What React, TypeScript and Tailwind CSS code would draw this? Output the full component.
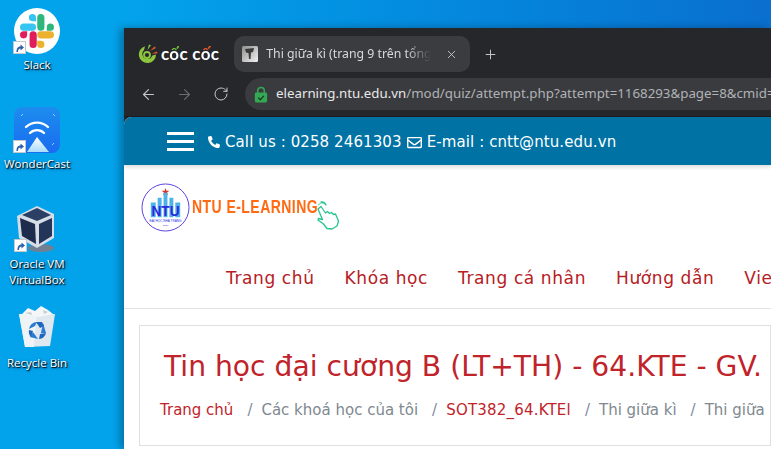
import { ArrowLeft, ArrowRight, Plus, RotateCw, X } from "lucide-react";
import { FaPhoneAlt, FaRegEnvelope } from "react-icons/fa";

const desktopFont = "font-['Open_Sans','Noto_Sans',sans-serif]";
const pageFont = "font-['DejaVu_Sans','Liberation_Sans',sans-serif]";

function ShortcutBadge() {
    return (
        <div className="absolute left-0 bottom-0 flex h-[13px] w-[13px] items-center justify-center border border-[#c4c8cc] bg-white">
            <svg viewBox="0 0 11 11" className="h-[11px] w-[11px]">
                <path d="M2.5 10 C2.5 6 4 4.5 6.5 4.5 L6.5 2.5 L10 5.5 L6.5 8.5 L6.5 6.5 C5 6.5 4 7.5 4 10 Z" fill="#2f5fa8" />
            </svg>
        </div>
    );
}

function SlackIcon() {
    return (
        <div className="relative h-[46px] w-[46px]">
            <div className="flex h-[46px] w-[46px] items-center justify-center rounded-full bg-white">
                <svg viewBox="0 0 54 54" className="h-[34px] w-[34px]">
                    <path d="M19.7 0a5.7 5.7 0 0 0 0 11.4h5.7V5.7A5.7 5.7 0 0 0 19.7 0zm0 15.2H5.7a5.7 5.7 0 0 0 0 11.4h14a5.7 5.7 0 0 0 0-11.4z" fill="#36c5f0" />
                    <path d="M54 20.9a5.7 5.7 0 0 0-11.4 0v5.7h5.7a5.7 5.7 0 0 0 5.7-5.7zm-15.2 0v-15.2a5.7 5.7 0 0 0-11.4 0v15.2a5.7 5.7 0 0 0 11.4 0z" fill="#2eb67d" />
                    <path d="M33.1 54a5.7 5.7 0 0 0 0-11.4h-5.7v5.7a5.7 5.7 0 0 0 5.7 5.7zm0-15.2h15.2a5.7 5.7 0 0 0 0-11.4H33.1a5.7 5.7 0 0 0 0 11.4z" fill="#ecb22e" />
                    <path d="M0 33.1a5.7 5.7 0 0 0 11.4 0v-5.7H5.7A5.7 5.7 0 0 0 0 33.1zm15.2 0v15.2a5.7 5.7 0 0 0 11.4 0V33.1a5.7 5.7 0 0 0-11.4 0z" fill="#e01e5a" />
                </svg>
            </div>
            <div className="absolute -left-[1px] bottom-0"><div className="relative h-[13px] w-[13px]"><ShortcutBadge /></div></div>
        </div>
    );
}

function WonderCastIcon() {
    return (
        <div className="relative h-[46px] w-[46px]">
            <svg viewBox="0 0 46 46" className="h-[46px] w-[46px]">
                <defs>
                    <linearGradient id="wc" x1="0" y1="0" x2="0" y2="1">
                        <stop offset="0" stopColor="#1c8dee" />
                        <stop offset="1" stopColor="#1a6cf0" />
                    </linearGradient>
                    <linearGradient id="wcTri" x1="0" y1="0" x2="0" y2="1">
                        <stop offset="0" stopColor="#ffffff" />
                        <stop offset="1" stopColor="#a9dcfb" />
                    </linearGradient>
                </defs>
                <rect width="46" height="46" rx="8" fill="url(#wc)" />
                <path d="M12 20 A16 16 0 0 1 34 20" fill="none" stroke="#fff" strokeWidth="2.4" strokeLinecap="round" />
                <path d="M16 26 A10 10 0 0 1 30 26" fill="none" stroke="#fff" strokeWidth="2.4" strokeLinecap="round" />
                <path d="M23 30 L35 45 L13 45 Z" fill="url(#wcTri)" />
                <path d="M7 9 L9 7 M39 7 L41 9 M38 38 L40 36" stroke="#9fd2fa" strokeWidth="1" />
            </svg>
            <div className="absolute -left-[1px] bottom-0"><div className="relative h-[13px] w-[13px]"><ShortcutBadge /></div></div>
        </div>
    );
}

function VirtualBoxIcon() {
    return (
        <div className="relative h-[48px] w-[46px]">
            <svg viewBox="0 0 46 48" className="h-[48px] w-[46px]">
                <ellipse cx="27" cy="43" rx="13" ry="4" fill="#6f8092" />
                <path d="M23 1 L40 9 L40 33 L23 43 L5 33 L3 11 Z" fill="#d6dde6" />
                <path d="M23 3 L37 10 L23 16 L8 10 Z" fill="#2b3e63" />
                <path d="M6 13 L21 19 L22 39 L8 31 Z" fill="#1d2c4c" />
                <path d="M25 19 L38 13 L38 31 L25 39 Z" fill="#24355a" />
            </svg>
            <div className="absolute left-0 bottom-[1px]"><div className="relative h-[13px] w-[13px]"><ShortcutBadge /></div></div>
        </div>
    );
}

function RecycleBinIcon() {
    return (
        <div className="h-[47px]">
            <svg viewBox="0 0 40 44" className="h-[44px] w-[40px]">
                <path d="M2 9 L38 9 L33 41 L8 42 Z" fill="#dfe8ee" />
                <path d="M2 9 L20 9 L17 42 L8 42 Z" fill="#eef3f6" />
                <path d="M5 9 L11 3 L18 6 L24 1 L31 5 L36 9 L22 12 Z" fill="#f4f6f7" />
                <path d="M8 8 L14 7 L15 10 Z M26 5 L31 7 L27 9 Z" fill="#c5ced4" />
                <path d="M12 24 A8 8 0 0 1 20 17 L18 21 Z M26 18 L29 28 L24 28 Z M21 34 L13 32 L16 27 Z" fill="#2a7bd1" />
                <path d="M19 17 L25 17 L27 21 L23 23 Z M29 28 A8 8 0 0 1 22 34 L23 29 Z M14 32 A8 8 0 0 1 12 25 L16 26 Z" fill="#1e66bf" />
            </svg>
        </div>
    );
}

function DesktopItem({ x, y, width, lines, icon }: { x: number; y: number; width: number; lines: string[]; icon: React.ReactNode }) {
    return (
        <div className="absolute flex flex-col items-center" style={{ left: x, top: y, width }}>
            {icon}
            <div className={`mt-[3px] text-center text-[11.5px] leading-[16px] text-white [text-shadow:1px_1px_1px_#000,1px_1px_3px_#00305a] ${desktopFont}`}>
                {lines.map((line) => (
                    <div key={line} className="whitespace-nowrap">{line}</div>
                ))}
            </div>
        </div>
    );
}

function CocCocLogo() {
    return (
        <div className="flex items-center gap-[3px]">
            <svg viewBox="0 0 22 22" className="h-[22px] w-[22px]">
                <path d="M9 3.2 A8.6 8.6 0 1 0 20 11.5 L16.4 12.5 A5.2 5.2 0 1 1 8 7 Z" fill="#8cc63f" />
                <circle cx="11" cy="12" r="3" fill="none" stroke="#8cc63f" strokeWidth="1.8" />
                <path d="M11.5 7 L13 1.5 L15 2.2 Z" fill="#8cc63f" />
                <path d="M14 8 L18.5 3.5 L20 5 Z" fill="#e8562a" />
                <path d="M15.5 10.5 L21 8.6 L21.4 10.4 Z" fill="#e8562a" />
            </svg>
            <div className="text-[17px] leading-[22px] font-bold tracking-[0.3px] whitespace-pre text-white font-['Lato','Noto_Sans',sans-serif]">
                c<span className="bg-[linear-gradient(#6fbf3c_38%,#ffffff_38%)] bg-clip-text text-transparent">ố</span>c c<span className="bg-[linear-gradient(#e8562a_38%,#ffffff_38%)] bg-clip-text text-transparent">ố</span>c
            </div>
        </div>
    );
}

function TabFavicon() {
    return (
        <svg viewBox="0 0 16 16" className="h-[16px] w-[16px] shrink-0">
            <defs>
                <linearGradient id="fav" x1="0" y1="0" x2="1" y2="1">
                    <stop offset="0" stopColor="#8f8f8f" />
                    <stop offset="1" stopColor="#f2f2f2" />
                </linearGradient>
            </defs>
            <rect width="16" height="16" rx="1.5" fill="url(#fav)" />
            <path d="M3 3 L12 2 L11 6 L9 6.5 L8.5 13 L7 13 L6.5 7 L4 6.5 Z" fill="#3a3a3a" />
        </svg>
    );
}

function LockIcon() {
    return (
        <svg viewBox="0 0 14 18" className="h-[17px] w-[14px] shrink-0">
            <path d="M3.5 8 V5 a3.5 3.5 0 0 1 7 0 V8" fill="none" stroke="#34a853" strokeWidth="1.6" />
            <rect x="0.5" y="7" width="13" height="10.5" rx="1.5" fill="#34a853" />
            <path d="M4 12.3 L6.2 14.5 L10 10.5" fill="none" stroke="#1c3b26" strokeWidth="1.4" />
        </svg>
    );
}

function NtuLogo() {
    return (
        <svg viewBox="0 0 50 50" className="h-[49px] w-[49px] shrink-0">
            <circle cx="25" cy="25" r="24" fill="#fff" stroke="#5b3fe0" strokeWidth="1" />
            <path d="M25 5 L26 8 L29 8 L26.6 9.8 L27.5 12.5 L25 10.8 L22.5 12.5 L23.4 9.8 L21 8 L24 8 Z" fill="#d9342b" />
            <path d="M10 20 H15 V35 H10 Z M17 15 H21 V35 H17 Z M23 10 H27 V35 H23 Z M29 15 H33 V35 H29 Z M35 20 H40 V35 H35 Z" fill="#4fb2e6" />
            <text x="25" y="34" textAnchor="middle" fontSize="14" fontWeight="700" fill="#2a2ae0" fontFamily="Liberation Sans, sans-serif">NTU</text>
            <text x="25" y="39.5" textAnchor="middle" fontSize="3.2" fill="#2a2ae0" fontFamily="Liberation Sans, sans-serif">ĐẠI HỌC NHA TRANG</text>
            <text x="25" y="44" textAnchor="middle" fontSize="2.6" fill="#2a2ae0" fontFamily="Liberation Sans, sans-serif">1959</text>
        </svg>
    );
}

function HandPointer() {
    return (
        <svg viewBox="0 0 26 30" className="h-[30px] w-[26px]" fill="none" stroke="#25c48f" strokeWidth="1.3" strokeLinejoin="round" strokeLinecap="round">
            <path d="M7 2 A5 5 0 0 1 12 5" />
            <path d="M4.5 5 A4 4 0 0 1 9 3" opacity="0.6" />
            <path d="M4 9 L7 6.5 L11.5 13 L13.5 11.5 L15.5 13.5 L17.5 12.5 L19.5 14.5 L21.5 14 L24.5 21 L23 26 L18 29 L13 28.5 L9.5 24 L4 20 L4.5 18.5 L8.5 19.5 Z" />
        </svg>
    );
}

const navItems = ["Trang chủ", "Khóa học", "Trang cá nhân", "Hướng dẫn", "Vietnamese"];

function Slash() {
    return <span className="mr-[9px] ml-[14px] text-[#7e8c9e]">/</span>;
}

export default function App() {
    return (
        <div className="relative h-[449px] w-[771px] overflow-hidden bg-[#03a3ec]">
            <DesktopItem x={3} y={8} width={68} lines={["Slack"]} icon={<SlackIcon />} />
            <DesktopItem x={3} y={107} width={68} lines={["WonderCast"]} icon={<WonderCastIcon />} />
            <DesktopItem x={3} y={205} width={68} lines={["Oracle VM", "VirtualBox"]} icon={<VirtualBoxIcon />} />
            <DesktopItem x={3} y={305} width={68} lines={["Recycle Bin"]} icon={<RecycleBinIcon />} />

            <div className="absolute top-0 left-[124px] h-[28px] w-[647px] bg-gradient-to-r from-[#03a3ec] to-[#0a6fcf]" />

            {/* browser window */}
            <div className="absolute top-[28px] left-[124px] flex h-[421px] w-[647px] flex-col overflow-hidden bg-[#26272a] shadow-[-4px_0_8px_rgba(0,0,0,0.3)]">
                <div className="flex h-[44px] shrink-0 items-center bg-[#26272a] pt-[8px] pr-2 pl-[12px]">
                    <CocCocLogo />
                    <div className="ml-[15px] flex h-[36px] w-[236px] shrink-0 items-center rounded-[10px] bg-[#3b3c40] pr-[12px] pl-[8px] font-['Noto_Sans','Open_Sans',sans-serif]">
                        <TabFavicon />
                        <span className="ml-[8px] w-[165px] overflow-hidden text-[12.3px] whitespace-nowrap text-[#d8d8d8] [mask-image:linear-gradient(to_right,#000_85%,transparent)]">Thi giữa kì (trang 9 trên tổng số 10)</span>
                        <X className="ml-auto h-[13px] w-[13px] text-[#d0d0d0]" strokeWidth={1.6} />
                    </div>
                    <Plus className="ml-[13px] h-[15px] w-[15px] text-[#c4c4c4]" strokeWidth={1.6} />
                </div>

                <div className="flex h-[45px] shrink-0 items-center border-b border-[#1b1c1e] bg-[#26272a] pl-[16px]">
                    <ArrowLeft className="h-[17px] w-[17px] text-[#c8c8c8]" strokeWidth={1.5} />
                    <ArrowRight className="ml-[19px] h-[17px] w-[17px] text-[#6c6d70]" strokeWidth={1.5} />
                    <RotateCw className="ml-[20px] h-[16px] w-[16px] text-[#c8c8c8]" strokeWidth={1.5} />
                    <div className="ml-[16px] flex h-[32px] min-w-0 flex-1 items-center gap-[8px] rounded-l-[16px] bg-[#3a3b3f] pl-[9px] font-['Noto_Sans','Open_Sans',sans-serif]">
                        <LockIcon />
                        <span className="overflow-hidden text-[13.3px] whitespace-nowrap text-[#e8e8e8]">
                            elearning.ntu.edu.vn<span className="text-[#b0b2b6]">/mod/quiz/attempt.php?attempt=1168293&amp;page=8&amp;cmid=</span>
                        </span>
                    </div>
                </div>

                <div className={`flex min-h-0 flex-1 flex-col overflow-hidden rounded-tl-[8px] bg-white ${pageFont}`}>
                    <div className="flex h-[48px] shrink-0 items-center bg-[#0072a4] pl-[43px] text-[15px] tracking-[0.1px] whitespace-nowrap text-white shadow-[0_2px_4px_rgba(0,0,0,0.15)]">
                        <div className="flex w-[27px] flex-col gap-[5px]">
                            <div className="h-[3px] bg-white" />
                            <div className="h-[3px] bg-white" />
                            <div className="h-[3px] bg-white" />
                        </div>
                        <FaPhoneAlt className="mt-[2px] ml-[14px] h-[12px] w-[12px]" />
                        <span className="mt-[2px] ml-[5px]">Call us : 0258 2461303</span>
                        <FaRegEnvelope className="mt-[2px] ml-[5px] h-[15px] w-[15px]" />
                        <span className="mt-[2px] ml-[5px]">E-mail : cntt@ntu.edu.vn</span>
                    </div>

                    <div className="flex h-[90px] shrink-0 items-start pt-[18px] pl-[17px]">
                        <NtuLogo />
                        <div className="relative mt-[14px] ml-[2px] flex items-start">
                            <span className="origin-left scale-y-[1.25] text-[14px] leading-[20px] font-bold tracking-[0.45px] whitespace-nowrap text-[#ff6a13] font-['Liberation_Sans',sans-serif]">NTU E-LEARNING</span>
                            <div className="mt-[3px] -ml-[4px]"><HandPointer /></div>
                        </div>
                    </div>

                    <div className="flex h-[54px] shrink-0 items-start gap-[30px] overflow-hidden border-b border-[#e3e3e3] pl-[102px] text-[17px] leading-[47px] tracking-[0.6px] whitespace-nowrap text-[#b52025]">
                        {navItems.map((item) => (
                            <span key={item}>{item}</span>
                        ))}
                    </div>

                    <div className="mt-[16px] ml-[15px] flex h-[121px] shrink-0 flex-col overflow-hidden border border-[#e0e0e0] pt-[22px] pl-[20px] whitespace-nowrap">
                        <h1 className="pl-[4px] text-[28.2px] leading-[38px] text-[#c0232a]">Tin học đại cương B (LT+TH) - 64.KTE - GV. Nguyễn</h1>
                        <div className="mt-[14px] flex items-center text-[15px] leading-[20px] text-[#808890]">
                            <span className="text-[#c0232a]">Trang chủ</span>
                            <Slash />
                            <span>Các khoá học của tôi</span>
                            <Slash />
                            <span className="tracking-[0.2px] text-[#c0232a]">SOT382_64.KTEl</span>
                            <Slash />
                            <span>Thi giữa kì</span>
                            <Slash />
                            <span>Thi giữa kì</span>
                        </div>
                    </div>
                </div>
            </div>
        </div>
    );
}
